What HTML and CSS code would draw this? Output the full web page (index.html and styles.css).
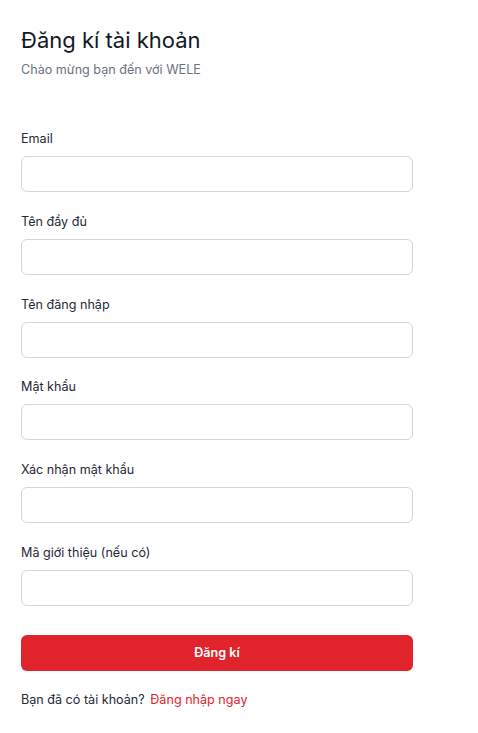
FILE: index.html
```html
<!DOCTYPE html>
<html lang="vi">
<head>
<meta charset="utf-8">
<title>Đăng kí tài khoản</title>
<link rel="stylesheet" href="styles.css">
</head>
<body>
<main class="page">
  <header class="head">
    <h1 class="title">Đăng kí tài khoản</h1>
    <p class="subtitle">Chào mừng bạn đến với WELE</p>
  </header>
  <form class="form">
    <div class="field">
      <label class="label" for="email">Email</label>
      <input class="input" id="email" type="email">
    </div>
    <div class="field">
      <label class="label" for="fullname">Tên đầy đủ</label>
      <input class="input" id="fullname" type="text">
    </div>
    <div class="field">
      <label class="label" for="username">Tên đăng nhập</label>
      <input class="input" id="username" type="text">
    </div>
    <div class="field">
      <label class="label" for="password">Mật khẩu</label>
      <input class="input" id="password" type="password">
    </div>
    <div class="field">
      <label class="label" for="confirm">Xác nhận mật khẩu</label>
      <input class="input" id="confirm" type="password">
    </div>
    <div class="field">
      <label class="label" for="ref">Mã giới thiệu (nếu có)</label>
      <input class="input" id="ref" type="text">
    </div>
    <button class="submit" type="button">Đăng kí</button>
  </form>
  <p class="footer">Bạn đã có tài khoản? <a class="link" href="#">Đăng nhập ngay</a></p>
</main>
</body>
</html>
```
FILE: styles.css
```css
* { box-sizing: border-box; }
html, body { margin: 0; padding: 0; background: #ffffff; }
body {
  font-family: Inter, "Noto Sans", "Liberation Sans", sans-serif;
  color: #1f2937;
}
.page {
  width: 434px;
  padding: 26px 21px 20px 21px;
}
.head {
  display: flex;
  flex-direction: column;
  gap: 6px;
}
.title {
  margin: 0;
  font-size: 22px;
  line-height: 28px;
  font-weight: 400;
  color: #111827;
}
.subtitle {
  margin: 0;
  font-size: 12.6px;
  line-height: 20px;
  color: #6b7280;
}
.form {
  margin-top: 49px;
  display: flex;
  flex-direction: column;
  gap: 19.8px;
}
.field {
  display: flex;
  flex-direction: column;
  gap: 7px;
}
.label {
  font-size: 12.6px;
  line-height: 20px;
  color: #1f2937;
}
.input {
  width: 392px;
  height: 36px;
  border: 1px solid #d4d6dd;
  border-radius: 6px;
  background: #fff;
  font: inherit;
  padding: 0 10px;
  outline: none;
}
.submit {
  margin-top: 8.8px;
  width: 392px;
  height: 36px;
  border: none;
  border-radius: 6px;
  background: #e1232b;
  color: #fff;
  font: inherit;
  font-size: 12.6px;
  font-weight: 600;
  cursor: pointer;
}
.footer {
  margin: 19px 0 0 0;
  font-size: 12.6px;
  line-height: 20px;
  color: #1f2937;
}
.link {
  color: #e1232b;
  text-decoration: none;
  margin-left: 2px;
}
```
